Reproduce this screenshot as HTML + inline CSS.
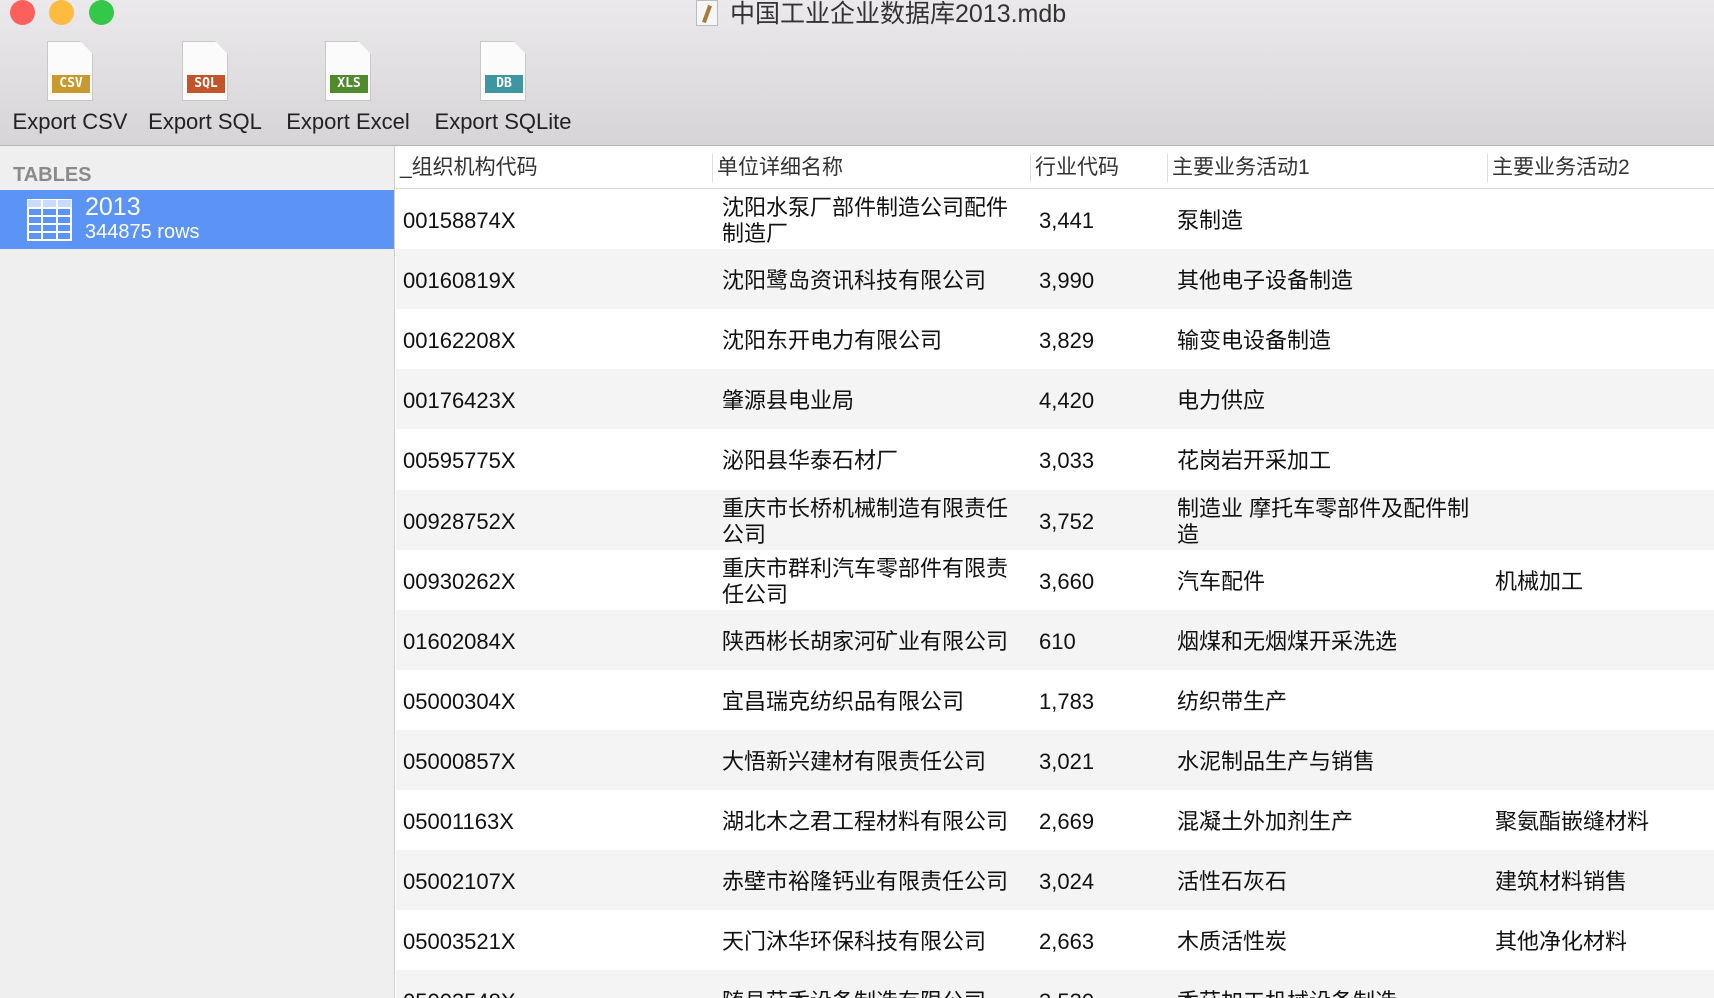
<!DOCTYPE html>
<html style="width:1714px;height:998px;overflow:hidden"><head><meta charset="utf-8"><style>
*{margin:0;padding:0;box-sizing:border-box}
body{width:1714px;height:998px;overflow:hidden;font-family:"Liberation Sans","Noto Sans CJK SC",sans-serif;background:#fff;position:relative}
.top{position:absolute;left:0;top:0;width:1714px;height:146px;background:linear-gradient(#ebe9eb,#d6d4d6);border-bottom:1px solid #b5b5b5}
.dot{position:absolute;top:0;width:25px;height:25px;border-radius:50%}
.title{position:absolute;top:-6px;left:696px;font-size:25px;color:#333;white-space:nowrap}
.tb{position:absolute;top:41px;text-align:center;font-size:22px;color:#222;white-space:nowrap}
.doc{width:46px;height:60px;margin:0 auto 8px;background:#fbfbfb;border:1px solid #c8c8c8;position:relative;clip-path:polygon(0 0,72% 0,100% 22%,100% 100%,0 100%)}
.badge{position:absolute;left:4px;top:33px;width:38px;height:18px;color:#fff;font:bold 13px "DejaVu Sans Mono",monospace;line-height:18px;text-align:center}
.side{position:absolute;left:0;top:146px;width:395px;height:852px;background:#efefef;border-right:1px solid #d0d0d0}
.tables{position:absolute;left:13px;top:18px;font-size:20px;font-weight:bold;color:#8a8a8a}
.sel{position:absolute;left:0;top:44px;width:394px;height:59px;background:#5b94f5;color:#fff}
.hdr{position:absolute;left:396px;top:146px;width:1318px;height:43px;border-bottom:1px solid #d8d8d8;background:#fff}
.hc{position:absolute;top:8px;font-size:21px;color:#333;height:28px;line-height:28px;padding-left:4px;border-left:1px solid #ddd}
.row{position:absolute;left:396px;width:1318px;height:60px;font-size:22px;color:#111}
.c{position:absolute;top:2px;height:60px;display:flex;align-items:center;line-height:26px}
</style></head><body>
<div class="top">
<div class="dot" style="left:10px;background:#fc605c;top:0"></div>
<div class="dot" style="left:49px;background:#fdbc40"></div>
<div class="dot" style="left:89px;background:#34c84a"></div>
<div class="title"><span style="display:inline-block;width:22px;height:26px;background:#f6f6f6;border:1px solid #bbb;vertical-align:-4px;margin-right:12px;position:relative"><span style="position:absolute;left:8px;top:4px;width:4px;height:18px;background:#a87a3a;transform:rotate(20deg)"></span></span>中国工业企业数据库2013.mdb</div>
<div class="tb" style="left:10px;width:120px"><div class="doc"><div class="badge" style="background:#c8992e">CSV</div></div>Export CSV</div>
<div class="tb" style="left:145px;width:120px"><div class="doc"><div class="badge" style="background:#c2562a">SQL</div></div>Export SQL</div>
<div class="tb" style="left:280px;width:136px"><div class="doc"><div class="badge" style="background:#4f8a2b">XLS</div></div>Export Excel</div>
<div class="tb" style="left:428px;width:150px"><div class="doc"><div class="badge" style="background:#3f96a3">DB</div></div>Export SQLite</div>
</div>
<div class="side">
<div class="tables">TABLES</div>
<div class="sel">
<svg style="position:absolute;left:27px;top:9px" width="45" height="42" viewBox="0 0 45 42"><rect x="1" y="1" width="43" height="40" fill="none" stroke="#fff" stroke-width="2"/><rect x="1" y="1" width="43" height="8" fill="#c8dcff"/><path d="M1 9H44M1 17H44M1 25H44M1 33H44M15 1V41M30 1V41" stroke="#fff" stroke-width="2"/></svg>
<div style="position:absolute;left:85px;top:3px;font-size:25px">2013</div>
<div style="position:absolute;left:85px;top:31px;font-size:20px">344875 rows</div>
</div>
</div>
<div class="hdr">
<div class="hc" style="left:0;border:none">_组织机构代码</div>
<div class="hc" style="left:316px">单位详细名称</div>
<div class="hc" style="left:634px">行业代码</div>
<div class="hc" style="left:771px">主要业务活动1</div>
<div class="hc" style="left:1091px">主要业务活动2</div>
</div>
<div id="rows"></div>
<script>
var d=[["00158874X","沈阳水泵厂部件制造公司配件<br>制造厂","3,441","泵制造",""],
["00160819X","沈阳鹭岛资讯科技有限公司","3,990","其他电子设备制造",""],
["00162208X","沈阳东开电力有限公司","3,829","输变电设备制造",""],
["00176423X","肇源县电业局","4,420","电力供应",""],
["00595775X","泌阳县华泰石材厂","3,033","花岗岩开采加工",""],
["00928752X","重庆市长桥机械制造有限责任<br>公司","3,752","制造业 摩托车零部件及配件制<br>造",""],
["00930262X","重庆市群利汽车零部件有限责<br>任公司","3,660","汽车配件","机械加工"],
["01602084X","陕西彬长胡家河矿业有限公司","610","烟煤和无烟煤开采洗选",""],
["05000304X","宜昌瑞克纺织品有限公司","1,783","纺织带生产",""],
["05000857X","大悟新兴建材有限责任公司","3,021","水泥制品生产与销售",""],
["05001163X","湖北木之君工程材料有限公司","2,669","混凝土外加剂生产","聚氨酯嵌缝材料"],
["05002107X","赤壁市裕隆钙业有限责任公司","3,024","活性石灰石","建筑材料销售"],
["05003521X","天门沐华环保科技有限公司","2,663","木质活性炭","其他净化材料"],
["05003548X","随县菇香设备制造有限公司","3,530","香菇加工机械设备制造",""]];
var x=[7,326,643,781,1099],h="";
d.forEach(function(r,i){h+='<div class="row" style="top:'+(189+i*60.1)+'px;background:'+(i%2?'#f4f4f4':'#fff')+'">';
r.forEach(function(c,j){h+='<div class="c" style="left:'+x[j]+'px">'+c+'</div>'});h+='</div>'});
document.getElementById('rows').innerHTML=h;
</script>
</body></html>
